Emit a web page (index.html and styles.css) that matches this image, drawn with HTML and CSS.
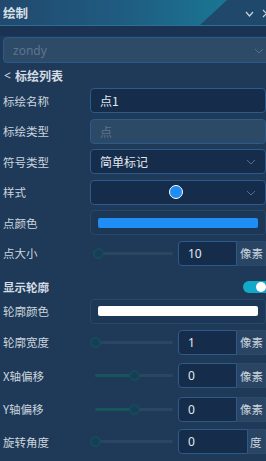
FILE: index.html
```html
<!DOCTYPE html>
<html lang="zh-CN">
<head>
    <meta charset="UTF-8">
    <meta name="viewport" content="width=device-width, initial-scale=1.0">
    <title>绘制</title>
    <link rel="stylesheet" href="styles.css">
</head>
<body>
    <!-- Panel Header -->
    <div class="header">
        <span class="header-title">绘制</span>
        <div class="header-tools">
            <svg class="tool" width="9" height="6" viewBox="0 0 9 6"><path d="M1 1 L4.5 5 L8 1" fill="none" stroke="#c8d4de" stroke-width="1.2"/></svg>
            <svg class="tool" width="9" height="9" viewBox="0 0 9 9"><path d="M1 1 L8 8 M8 1 L1 8" fill="none" stroke="#c8d4de" stroke-width="1.2"/></svg>
        </div>
    </div>
    <div class="strip"></div>

    <div class="panel">
        <div class="select select-top">
            <span class="placeholder">zondy</span>
            <svg class="chev" width="10" height="6" viewBox="0 0 10 6"><path d="M1 1 L5 5 L9 1" fill="none" stroke="#55708a" stroke-width="1"/></svg>
        </div>

        <div class="back-title"><span class="back">&lt;</span> 标绘列表</div>

        <!-- Basic Fields -->
        <div class="group">
            <div class="row">
                <label class="label">标绘名称</label>
                <div class="input">点1</div>
            </div>
            <div class="row">
                <label class="label">标绘类型</label>
                <div class="input disabled">点</div>
            </div>
            <div class="row">
                <label class="label">符号类型</label>
                <div class="input select">
                    <span>简单标记</span>
                    <svg class="chev" width="10" height="6" viewBox="0 0 10 6"><path d="M1 1 L5 5 L9 1" fill="none" stroke="#55708a" stroke-width="1"/></svg>
                </div>
            </div>
            <div class="row">
                <label class="label">样式</label>
                <div class="input select center">
                    <span class="dot"></span>
                    <svg class="chev" width="10" height="6" viewBox="0 0 10 6"><path d="M1 1 L5 5 L9 1" fill="none" stroke="#55708a" stroke-width="1"/></svg>
                </div>
            </div>
            <div class="row">
                <label class="label">点颜色</label>
                <div class="color-box"><span class="swatch blue"></span></div>
            </div>
            <div class="row">
                <label class="label">点大小</label>
                <div class="slider"><div class="track"><div class="fill" style="width: 5%"></div><span class="thumb" style="left: 5%"></span></div></div>
                <div class="num-group">
                    <div class="num">10</div>
                    <div class="unit">像素</div>
                </div>
            </div>
        </div>

        <!-- Outline Fields -->
        <div class="row toggle-row">
            <span class="label strong">显示轮廓</span>
            <span class="switch"><span class="knob"></span></span>
        </div>
        <div class="row">
            <label class="label">轮廓颜色</label>
            <div class="color-box"><span class="swatch white"></span></div>
        </div>
        <div class="row gap-s">
            <label class="label">轮廓宽度</label>
            <div class="slider"><div class="track"><div class="fill" style="width: 0%"></div><span class="thumb" style="left: 0%"></span></div></div>
            <div class="num-group">
                <div class="num">1</div>
                <div class="unit">像素</div>
            </div>
        </div>
        <div class="row gap-l">
            <label class="label">X轴偏移</label>
            <div class="slider"><div class="track"><div class="fill" style="width: 50%"></div><span class="thumb" style="left: 50%"></span></div></div>
            <div class="num-group">
                <div class="num">0</div>
                <div class="unit">像素</div>
            </div>
        </div>
        <div class="row gap-l">
            <label class="label">Y轴偏移</label>
            <div class="slider"><div class="track"><div class="fill" style="width: 50%"></div><span class="thumb" style="left: 50%"></span></div></div>
            <div class="num-group">
                <div class="num">0</div>
                <div class="unit">像素</div>
            </div>
        </div>
        <div class="row gap-m">
            <label class="label">旋转角度</label>
            <div class="slider"><div class="track"><div class="fill" style="width: 0%"></div><span class="thumb" style="left: 0%"></span></div></div>
            <div class="num-group">
                <div class="num wide">0</div>
                <div class="unit narrow">度</div>
            </div>
        </div>
    </div>
</body>
</html>
```

FILE: styles.css
```css
/* General Styles */
* {
    margin: 0;
    padding: 0;
    box-sizing: border-box;
}
html, body {
    width: 266px;
    height: 461px;
    overflow: hidden;
}
body {
    font-family: "Noto Sans CJK SC", "Noto Sans", sans-serif;
    background-color: #1e3a58;
    color: #cdd6df;
    font-size: 12px;
}

/* Header */
.header {
    position: relative;
    height: 26px;
    display: flex;
    align-items: center;
    padding-left: 3px;
    background-color: #1f486a;
    border-bottom: 1.5px solid #2b6e96;
    overflow: hidden;
}
.header::before {
    content: "";
    position: absolute;
    left: 0;
    top: 0;
    width: 228px;
    height: 100%;
    background: linear-gradient(to right, #22496d 0%, #1f5a80 50%, #1a7694 100%);
    clip-path: polygon(0 0, 227px 0, 200px 100%, 0 100%);
}
.header::after {
    content: "";
    position: absolute;
    left: 0;
    bottom: -1.5px;
    width: 100%;
    height: 1.5px;
    background: linear-gradient(to right, #46bedc 0%, #3a9cc4 40%, #2b6e96 100%);
}
.header-title {
    position: relative;
    font-weight: bold;
    font-size: 12.5px;
    color: #d8e0e7;
}
.header-tools {
    position: absolute;
    left: 245px;
    top: 9px;
    display: flex;
    gap: 8px;
    align-items: center;
    white-space: nowrap;
}
.strip {
    height: 10px;
    background-color: #1a3352;
}

/* Panel */
.panel {
    padding-left: 3px;
}
.select-top {
    height: 26px;
    margin-top: 1px;
    width: 270px;
    background-color: #2d4a67;
    border: 1px solid #2b5b8d;
    border-radius: 4px;
    display: flex;
    align-items: center;
    padding-left: 9px;
    position: relative;
}
.select-top .chev {
    position: absolute;
    left: 250px;
    top: 10px;
}
.placeholder {
    color: #5e7590;
    font-family: "Noto Sans", sans-serif;
    font-size: 12px;
}
.back-title {
    height: 25px;
    display: flex;
    align-items: center;
    font-weight: bold;
    color: #d4dce4;
    font-size: 12px;
    padding-left: 1px;
}
.back {
    font-weight: normal;
    margin-right: 4px;
    font-family: "Noto Sans", sans-serif;
}

/* Rows */
.group {
    display: flex;
    flex-direction: column;
    gap: 5.6px;
}
.row {
    display: flex;
    align-items: center;
    height: 25px;
}
.label {
    width: 87px;
    flex-shrink: 0;
    font-size: 11.5px;
    color: #ccd5de;
}
.label.strong {
    font-weight: bold;
    color: #d4dce4;
}
.input {
    flex: 1;
    height: 25px;
    background-color: #152c4b;
    border: 1px solid #2b5a8d;
    border-radius: 4px;
    display: flex;
    align-items: center;
    padding-left: 9px;
    color: #e2e8ee;
    position: relative;
}
.input.disabled {
    background-color: #2c4966;
    color: #5e7590;
}
.input .chev {
    position: absolute;
    right: 9px;
    top: 9px;
}
.input.center {
    justify-content: center;
}
.dot {
    width: 14px;
    height: 14px;
    border-radius: 50%;
    background-color: #1e8ef5;
    border: 1.5px solid #ffffff;
    margin-right: 14px;
}
.color-box {
    flex: 1;
    height: 25px;
    border: 1px solid #25486c;
    border-radius: 4px;
    background-color: #1c3856;
    padding: 0 7px;
    display: flex;
    align-items: center;
}
.swatch {
    display: block;
    width: 100%;
    height: 10px;
    border-radius: 2px;
}
.swatch.blue {
    background-color: #1e8ef5;
}
.swatch.white {
    background-color: #ffffff;
}

/* Slider */
.slider {
    width: 88px;
    flex-shrink: 0;
    padding: 0 5px;
}
.track {
    position: relative;
    height: 3px;
    border-radius: 2px;
    background-color: #2a4661;
}
.fill {
    height: 100%;
    border-radius: 2px;
    background-color: #17545c;
}
.thumb {
    position: absolute;
    top: 50%;
    width: 11px;
    height: 11px;
    margin: -5.5px 0 0 -5.5px;
    border-radius: 50%;
    background-color: #1b3b5a;
    border: 2px solid #124d55;
}

/* Number Input */
.num-group {
    flex: 1;
    display: flex;
    height: 25px;
}
.num {
    width: 59px;
    background-color: #152c4b;
    border: 1px solid #2b5a8d;
    border-radius: 4px 0 0 4px;
    display: flex;
    align-items: center;
    padding-left: 9px;
    color: #e2e8ee;
    font-family: "Noto Sans", sans-serif;
    font-size: 12px;
}
.num.wide {
    width: 70px;
}
.unit {
    flex: 1;
    background-color: #2a4563;
    border: 1px solid #2a4a6c;
    border-left: none;
    display: flex;
    align-items: center;
    padding-left: 3px;
    color: #cbd4dd;
    font-size: 11.5px;
}
.unit.narrow {
    padding-left: 2px;
}

/* Toggle */
.toggle-row {
    height: 22px;
    margin-top: 10px;
    margin-bottom: 1px;
    position: relative;
}
.switch {
    position: absolute;
    left: 240px;
    top: 5px;
    width: 28px;
    height: 12px;
    border-radius: 6px;
    background-color: #13a9c9;
}
.knob {
    position: absolute;
    left: 13px;
    top: 1px;
    width: 10px;
    height: 10px;
    border-radius: 50%;
    background-color: #ffffff;
}
.gap-s {
    margin-top: 6px;
}
.gap-l {
    margin-top: 8.4px;
}
.gap-m {
    margin-top: 7.6px;
}
```
